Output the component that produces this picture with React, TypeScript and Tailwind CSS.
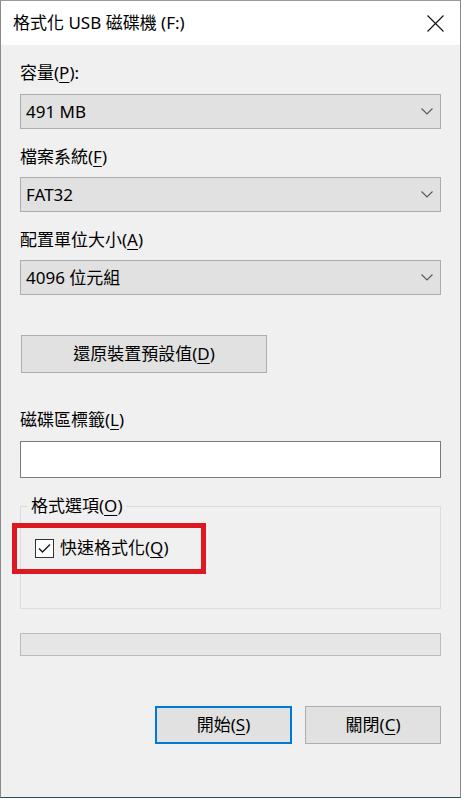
import React from "react";

const FONT = '"Noto Sans", "Noto Sans CJK TC", sans-serif';

function Chevron() {
  return (
    <svg width="12" height="7" viewBox="0 0 12 7" className="shrink-0">
      <polyline points="0.5,0.5 6,6 11.5,0.5" fill="none" stroke="#5a5a5a" strokeWidth="1.2" />
    </svg>
  );
}

function Combo({ value }: { value: string }) {
  return (
    <div className="flex h-[35px] items-center justify-between border border-[#adadad] bg-[#e1e1e1] pl-[5px] pr-[7px] text-[17px] leading-[24px] text-black">
      <span>{value}</span>
      <Chevron />
    </div>
  );
}

function Label({ children, mt }: { children: React.ReactNode; mt: string }) {
  return <div className={`h-[24px] text-[17px] leading-[24px] text-black ${mt}`}>{children}</div>;
}

function U({ children }: { children: React.ReactNode }) {
  return <span className="underline decoration-1 underline-offset-[3px]">{children}</span>;
}

export default function App() {
  return (
    <div
      className="flex h-[798px] w-[461px] flex-col border-x border-t border-b border-x-[#8a8a8a] border-t-[#9a9a9a] border-b-[#1e4f6e] bg-[#f0f0f0]"
      style={{ fontFamily: FONT }}
    >
      {/* Title bar */}
      <div className="flex h-[44px] shrink-0 items-center justify-between bg-white pl-[12px] pr-[16px]">
        <span className="text-[17px] leading-[24px] text-black">格式化 USB 磁碟機 (F:)</span>
        <svg width="17" height="17" viewBox="0 0 17 17">
          <line x1="0.5" y1="0.5" x2="16.5" y2="16.5" stroke="#111" strokeWidth="1.1" />
          <line x1="16.5" y1="0.5" x2="0.5" y2="16.5" stroke="#111" strokeWidth="1.1" />
        </svg>
      </div>

      {/* Body */}
      <div className="flex flex-1 flex-col px-[19px]">
        <Label mt="mt-[16px]">
          容量(<U>P</U>):
        </Label>
        <div className="mt-[9px]">
          <Combo value="491 MB" />
        </div>

        <Label mt="mt-[16px]">
          檔案系統(<U>F</U>)
        </Label>
        <div className="mt-[8px]">
          <Combo value="FAT32" />
        </div>

        <Label mt="mt-[16px]">
          配置單位大小(<U>A</U>)
        </Label>
        <div className="mt-[8px]">
          <Combo value="4096 位元組" />
        </div>

        <div className="mt-[40px] flex">
          <div className="ml-[1px] flex h-[38px] w-[246px] items-center justify-center border border-[#adadad] bg-[#e1e1e1] text-[17px] leading-[24px] text-black">
            還原裝置預設值(<U>D</U>)
          </div>
        </div>

        <Label mt="mt-[35px]">
          磁碟區標籤(<U>L</U>)
        </Label>
        <div className="mt-[9px] h-[37px] border border-[#7a7a7a] bg-white" />

        {/* Group box */}
        <div className="relative mt-[28px] h-[103px] border border-[#dcdcdc]">
          <div className="absolute left-[7px] top-[-13px] bg-[#f0f0f0] px-[3px] text-[17px] leading-[24px] text-black">
            格式選項(<U>O</U>)
          </div>
          <div className="mt-[29px] flex h-[24px] items-center pl-[14px]">
            <div className="flex h-[19px] w-[19px] items-center justify-center border border-[#333] bg-white">
              <svg width="15" height="15" viewBox="0 0 15 15">
                <polyline points="2,7.5 5.5,11 13,3.5" fill="none" stroke="#1a1a1a" strokeWidth="1.4" />
              </svg>
            </div>
            <span className="ml-[6px] text-[17px] leading-[24px] text-black">
              快速格式化(<U>Q</U>)
            </span>
          </div>
          {/* red annotation box */}
          <div className="absolute left-[-9px] top-[16px] h-[51px] w-[194px] border-[5px] border-[#dc1820]" />
        </div>

        {/* Progress bar */}
        <div className="mt-[24px] h-[23px] border border-[#bcbcbc] bg-[#e6e6e6]" />

        {/* Buttons */}
        <div className="mt-[50px] flex justify-end gap-[13px]">
          <div className="flex h-[38px] w-[137px] items-center justify-center border-2 border-[#0078d7] bg-[#e1e1e1] text-[17px] leading-[24px] text-black">
            開始(<U>S</U>)
          </div>
          <div className="flex h-[38px] w-[136px] items-center justify-center border border-[#adadad] bg-[#e1e1e1] text-[17px] leading-[24px] text-black">
            關閉(<U>C</U>)
          </div>
        </div>
      </div>
    </div>
  );
}
